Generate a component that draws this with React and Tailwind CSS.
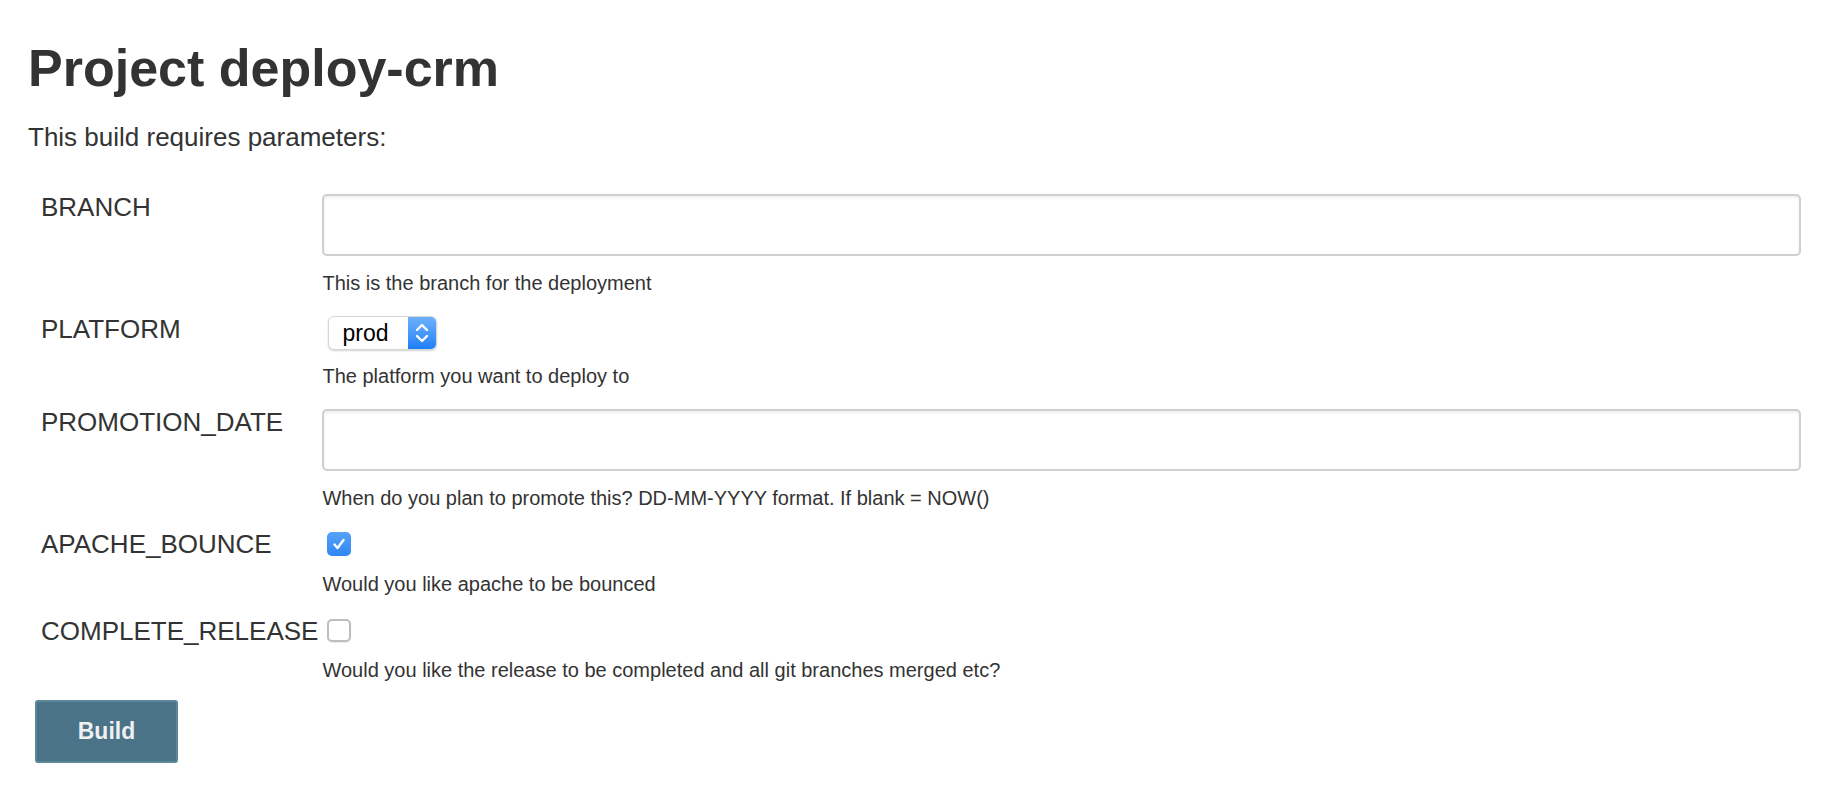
import React from "react";

const params = [
  {
    name: "BRANCH",
    type: "text",
    rowGap: "mt-[40px]",
    descGap: "mt-[15px]",
    desc: "This is the branch for the deployment",
  },
  {
    name: "PLATFORM",
    type: "select",
    value: "prod",
    rowGap: "mt-[19px]",
    descGap: "mt-[14px]",
    desc: "The platform you want to deploy to",
  },
  {
    name: "PROMOTION_DATE",
    type: "text",
    rowGap: "mt-[19px]",
    descGap: "mt-[15px]",
    desc: "When do you plan to promote this? DD-MM-YYYY format. If blank = NOW()",
  },
  {
    name: "APACHE_BOUNCE",
    type: "checkbox",
    checked: true,
    rowGap: "mt-[19px]",
    descGap: "mt-[13px]",
    desc: "Would you like apache to be bounced",
  },
  {
    name: "COMPLETE_RELEASE",
    type: "checkbox",
    checked: false,
    rowGap: "mt-[20px]",
    descGap: "mt-[12px]",
    desc: "Would you like the release to be completed and all git branches merged etc?",
  },
];

const Control = ({ p }) => {
  if (p.type === "text") {
    return (
      <div className="mt-[2px] h-[62px] w-full rounded-[5px] border-2 border-[#cfcfcf] bg-white shadow-[inset_0_2px_3px_rgba(0,0,0,0.06)]" />
    );
  }
  if (p.type === "select") {
    return (
      <div className="ml-[6px] mt-[2px] flex h-[34px] w-[109px] overflow-hidden rounded-[6px] border border-[#d6d6d6] bg-white shadow-[0_1px_2px_rgba(0,0,0,0.18)]">
        <span className="flex-1 pl-[13px] text-[23px] leading-[32px] text-black">{p.value}</span>
        <span className="flex w-[28px] items-center justify-center bg-gradient-to-b from-[#6db1fc] to-[#1b7ff6]">
          <svg width="16" height="26" viewBox="0 0 16 26" fill="none" stroke="white" strokeWidth="2.4" strokeLinecap="round" strokeLinejoin="round">
            <path d="M3 10l5-5 5 5" />
            <path d="M3 16l5 5 5-5" />
          </svg>
        </span>
      </div>
    );
  }
  return p.checked ? (
    <div className="ml-[5px] mt-[3px] flex h-[24px] w-[24px] items-center justify-center rounded-[5px] bg-gradient-to-b from-[#55a2fa] to-[#2f86f4]">
      <svg width="16" height="16" viewBox="0 0 16 16" fill="none" stroke="white" strokeWidth="2.4" strokeLinecap="round" strokeLinejoin="round">
        <path d="M3.5 8.5l3 3.5 6-8" />
      </svg>
    </div>
  ) : (
    <div className="ml-[5px] mt-[3px] h-[23px] w-[24px] rounded-[5px] border-2 border-[#bdbdbd] bg-white shadow-[0_1px_1px_rgba(0,0,0,0.08)]" />
  );
};

export default function App() {
  return (
    <div className="min-h-screen bg-white pl-[28px] pr-[23px] pt-[42px] font-['Liberation_Sans',Arial,sans-serif] text-[#333]">
      <h1 className="text-[52px] font-bold leading-none">Project deploy-crm</h1>
      <p className="mt-[28px] text-[26px] leading-[30px]">This build requires parameters:</p>

      <div className="grid grid-cols-[auto_1fr]">
        {params.map((p) => (
          <React.Fragment key={p.name}>
            <div className={`pl-[13px] pr-[4px] text-[26px] leading-[30px] ${p.rowGap}`}>{p.name}</div>
            <div className={p.rowGap}>
              <Control p={p} />
            </div>
            <div />
            <div className={`text-[20px] leading-[24px] ${p.descGap}`}>{p.desc}</div>
          </React.Fragment>
        ))}
      </div>

      <button className="ml-[7px] mt-[18px] h-[63px] w-[143px] rounded-[3px] border-2 border-[#5d879b] bg-[#4b7387] text-[23px] font-bold text-[#eef0f2]">
        Build
      </button>
    </div>
  );
}
